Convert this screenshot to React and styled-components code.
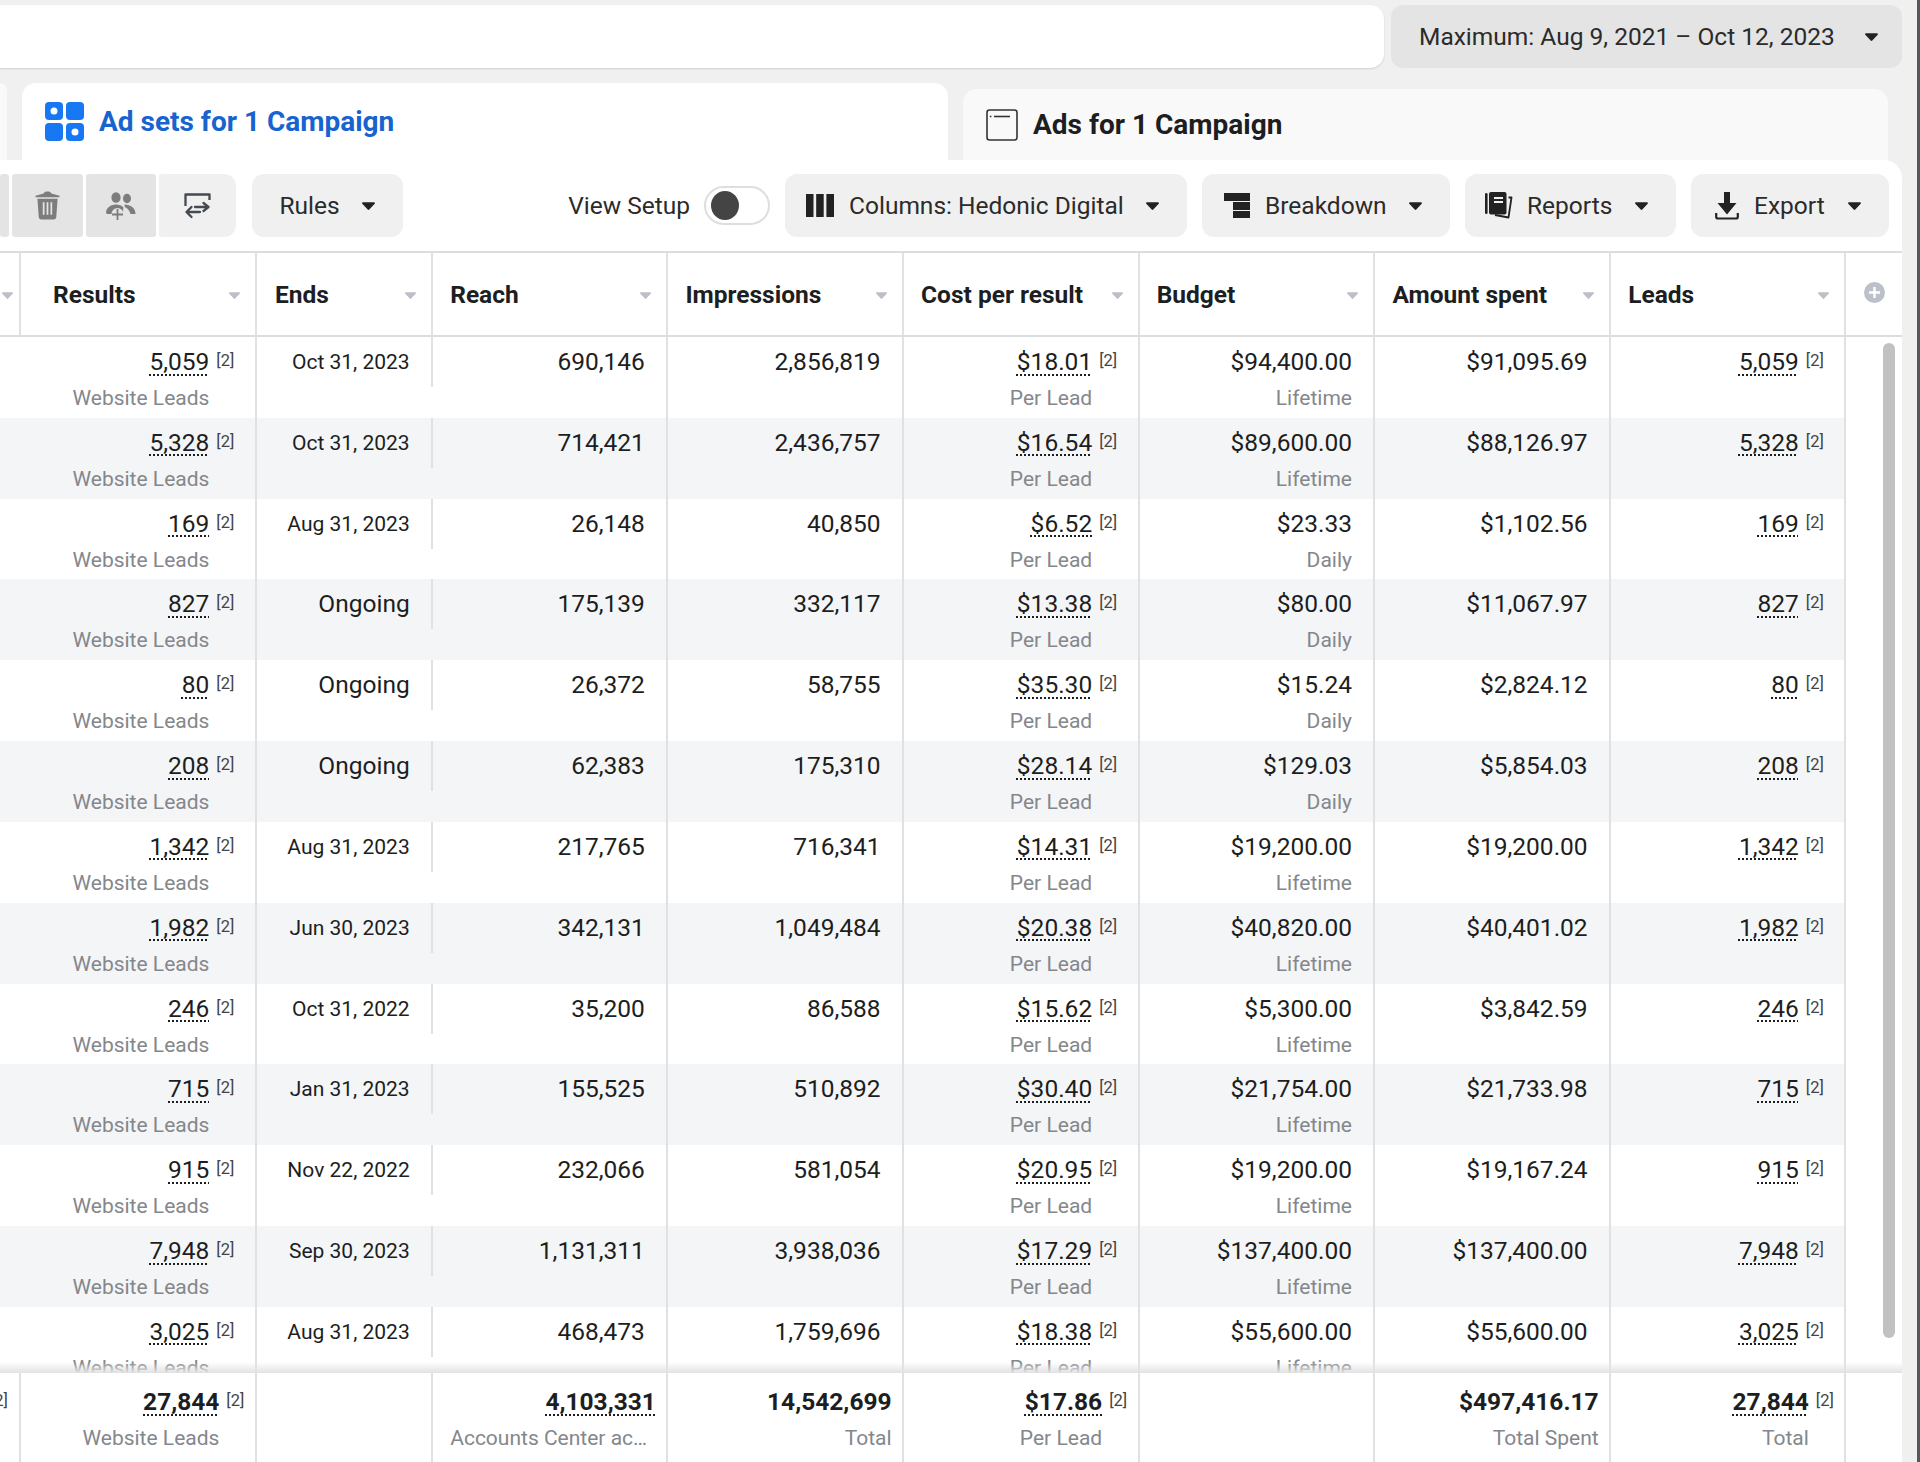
import React from 'react';
import styled, { createGlobalStyle } from 'styled-components';

const GRID = '21.1px 235.8px 176.3px 235.2px 235.7px 235.6px 235.8px 235.7px 235.2px 55.6px';

const GlobalStyle = createGlobalStyle`
  html, body { margin: 0; padding: 0; }
  body { font-family: Roboto, "Liberation Sans", sans-serif; color: #1c1e21; }
  * { box-sizing: border-box; }
`;

const Page = styled.div`
  display: flex;
  width: 1920px;
  height: 1462px;
  overflow: hidden;
  background: #f0f0f0;
`;

const Main = styled.div`
  display: flex;
  flex-direction: column;
  width: 1917px;
`;

const ScreenEdge = styled.div`
  width: 3px;
  background: #55585c;
`;

const TopRow = styled.div`
  display: flex;
  flex: none;
  gap: 7px;
  height: 68px;
  padding-top: 5px;
`;

const SearchBar = styled.div`
  width: 1384px;
  background: #fff;
  border-radius: 0 14px 14px 0;
  box-shadow: 0 1px 2px rgba(0, 0, 0, 0.14);
`;

const DatePicker = styled.div`
  display: flex;
  align-items: center;
  justify-content: space-between;
  width: 511px;
  padding: 0 23px 0 28px;
  background: #e4e4e4;
  border-radius: 12px;
  font-size: 24.5px;
  color: #2b2b2b;
`;

const TabRow = styled.div`
  display: flex;
  flex: none;
  align-items: flex-end;
  gap: 15px;
  height: 92px;
`;

const TabStub = styled.div`
  width: 7px;
  height: 77px;
  background: #f9f9f9;
  border-radius: 0 12px 0 0;
`;

const Tab = styled.div`
  display: flex;
  align-items: center;
  gap: 15px;
  height: ${(p) => (p.$active ? '77px' : '71px')};
  width: ${(p) => (p.$active ? '926px' : '925px')};
  padding-left: 23px;
  background: ${(p) => (p.$active ? '#fff' : '#f9f9f9')};
  color: ${(p) => (p.$active ? '#1763cf' : '#1c1e21')};
  border-radius: 14px 14px 0 0;
  font-size: 28px;
  font-weight: 700;
`;

const Panel = styled.div`
  display: flex;
  flex: 1;
  flex-direction: column;
  min-height: 0;
  width: 1902px;
  background: #fff;
  border-radius: 0 18px 0 0;
`;

const Toolbar = styled.div`
  display: flex;
  flex: none;
  align-items: center;
  height: 91px;
  padding: 14px 13px 14px 0;
`;

const IconGroup = styled.div`
  display: flex;
  gap: 3px;
  margin-right: 16px;
`;

const IconButton = styled.div`
  display: flex;
  align-items: center;
  justify-content: center;
  width: ${(p) => p.$w}px;
  height: 63px;
  background: ${(p) => (p.$off ? '#e4e4e4' : '#f0f0f0')};
  border-radius: ${(p) => p.$radius || '3px'};
`;

const Button = styled.div`
  display: flex;
  flex: none;
  align-items: center;
  justify-content: space-between;
  width: ${(p) => p.$w}px;
  height: 63px;
  padding: 0 27px 0 ${(p) => p.$pad || 21}px;
  background: #f0f0f0;
  border-radius: 12px;
  font-size: 24.5px;
  color: #2b2b2b;
`;

const ButtonLabel = styled.div`
  display: flex;
  align-items: center;
  gap: ${(p) => p.$gap || 15}px;
`;

const RightTools = styled.div`
  display: flex;
  align-items: center;
  gap: 15px;
  margin-left: auto;
`;

const ViewSetup = styled.div`
  display: flex;
  align-items: center;
  gap: 14px;
  font-size: 24.5px;
  color: #2b2b2b;
`;

const Toggle = styled.div`
  display: flex;
  align-items: center;
  width: 66px;
  height: 39px;
  padding-left: 5px;
  background: #fff;
  border: 2px solid #dedede;
  border-radius: 20px;
`;

const Knob = styled.div`
  width: 28px;
  height: 29px;
  border-radius: 50%;
  background: #444;
`;

const HeaderRow = styled.div`
  display: grid;
  flex: none;
  grid-template-columns: ${GRID};
  height: 86px;
  border-top: 2px solid #dcdddf;
  border-bottom: 2px solid #dcdddf;
`;

const HeaderCell = styled.div`
  display: flex;
  align-items: center;
  justify-content: space-between;
  padding: 0 14px 0 ${(p) => p.$indent || 17}px;
  border-right: 2px solid #e0e1e3;
  font-size: 24.5px;
  font-weight: 700;
  white-space: nowrap;
  overflow: hidden;
`;

const LastHeaderCell = styled.div`
  display: flex;
  justify-content: center;
  padding-top: 29px;
`;

const Body = styled.div`
  flex: 1;
  min-height: 0;
  overflow: hidden;
  position: relative;
`;

const Thumb = styled.div`
  position: absolute;
  top: 6px;
  right: 7px;
  width: 12px;
  height: 995px;
  border-radius: 6px;
  background: #c1c1c1;
`;

const Row = styled.div`
  display: grid;
  grid-template-columns: ${GRID};
  height: 80.83px;
`;

const Cell = styled.div`
  padding: 10px 21.5px 0 0;
  background: ${(p) => (p.$alt ? '#f4f5f7' : '#fff')};
  border-right: ${(p) => (p.$bare ? 'none' : '2px solid #e0e1e3')};
  text-align: right;
`;

const EndsBox = styled.div`
  height: 50px;
  margin: -10px -21.5px 0 0;
  padding: 10px 21.5px 0 0;
  border-right: 2px solid #e0e1e3;
`;

const Value = styled.div`
  font-size: 24.5px;
  line-height: 30px;
  font-weight: ${(p) => (p.$bold ? 700 : 400)};
  text-align: ${(p) => p.$align || 'inherit'};
`;

const EndsText = styled.div`
  font-size: ${(p) => (p.$big ? '24.5px' : '21px')};
  line-height: 30px;
`;

const Linked = styled.span`
  text-decoration: underline dotted 2px;
  text-underline-offset: 4px;
  text-decoration-skip-ink: none;
`;

const Sub = styled.div`
  margin-top: 8px;
  font-size: 21px;
  line-height: 26px;
  color: #84878b;
`;

const MetricGrid = styled.div`
  display: grid;
  grid-template-columns: 1fr 25px;
  margin-right: ${(p) => (p.$foot ? '0' : '-1px')};
`;

const Sup = styled.div`
  justify-self: end;
  font-size: 16.5px;
  line-height: 27px;
  color: #444;
`;

const SubInMetric = styled(Sub)`
  grid-column: 1;
`;

const Footer = styled.div`
  display: grid;
  flex: none;
  grid-template-columns: ${GRID};
  height: 89px;
  background: #fff;
  position: relative;

  &::before {
    content: '';
    position: absolute;
    left: 0;
    right: 0;
    top: -11px;
    height: 11px;
    background: linear-gradient(rgba(225, 225, 225, 0), #e2e2e2);
  }
`;

const FootCell = styled.div`
  padding: ${(p) => (p.$left ? '14px 10.5px 0 17px' : '14px 10.5px 0 0')};
  border-right: ${(p) => (p.$bare ? 'none' : '2px solid #e0e1e3')};
  text-align: ${(p) => (p.$left ? 'left' : 'right')};
  overflow: hidden;
`;

const ClippedCell = styled.div`
  display: flex;
  justify-content: flex-end;
  width: 8px;
  padding-top: 14px;
  font-size: 16.5px;
  line-height: 27px;
  color: #444;
  white-space: nowrap;
`;

const FootEdge = styled.div`
  border-right: 2px solid #e0e1e3;
  overflow: hidden;
`;

const Truncated = styled(Sub)`
  white-space: nowrap;
  overflow: hidden;
  text-overflow: ellipsis;
`;

const Svg = styled.svg`
  flex: none;
  margin-top: ${(p) => p.$nudge || 0}px;
`;

const Caret = ({ w = 15, h = 10, color = '#222', nudge }) => (
  <Svg $nudge={nudge} width={w} height={h} viewBox="0 0 15 10">
    <path d="M2 1.2h11c.9 0 1.3 1 .7 1.6L8.300 8.600c-.4.5-1.200.5-1.600 0L1.300 2.800C.7 2.200 1.100 1.200 2 1.200z" fill={color} />
  </Svg>
);

const SortCaret = () => <Caret w={13} h={9} color="#bcc0c6" nudge={3} />;

const AdSetsIcon = () => (
  <svg width="39" height="39" viewBox="0 0 39 39">
    <rect x="0" y="0" width="18" height="18" rx="4" fill="#1877f2" />
    <rect x="21" y="0" width="18" height="18" rx="4" fill="#1877f2" />
    <rect x="0" y="21" width="18" height="18" rx="4" fill="#1877f2" />
    <rect x="21" y="21" width="18" height="18" rx="4" fill="#1877f2" />
    <circle cx="9" cy="9" r="3.5" fill="#fff" />
    <circle cx="30" cy="30" r="3.5" fill="#fff" />
  </svg>
);

const AdsIcon = () => (
  <svg width="32" height="32" viewBox="0 0 32 32" fill="none" stroke="#333" strokeWidth="1.6">
    <rect x="1" y="1" width="30" height="30" rx="2.5" />
    <path d="M8 7.5h16" />
    <path d="M3.8 7.5h1.6" />
  </svg>
);

const TrashIcon = () => (
  <svg width="25" height="29" viewBox="0 0 26 30" fill="#7d7d7d">
    <path d="M9 2.500C9.600 1 11 .5 13 .5s3.400.5 4 2l8.500 2.300v1.700H.5V4.800z" />
    <path d="M2.500 8h21l-1.400 19c-.1 1.600-1.100 2.500-2.700 2.500H6.600c-1.600 0-2.600-.9-2.700-2.500z" />
    <path d="M9 11.500v13M13 11.500v13M17 11.500v13" stroke="#e4e4e4" strokeWidth="1.800" fill="none" />
  </svg>
);

const PeopleIcon = () => (
  <svg width="30" height="28" viewBox="0 0 30 28" fill="#7d7d7d">
    <ellipse cx="10" cy="5.500" rx="4.600" ry="5.300" />
    <ellipse cx="21" cy="6.500" rx="4" ry="4.700" />
    <path d="M0 21c0-5 4.500-8.500 10-8.500 3 0 5.500 1 7.300 2.700L17 22H1z" />
    <path d="M18.500 12.500c6 0 11 3.500 11 9.500h-5c-.8-3.200-2.700-5.500-5.700-7z" />
    <circle cx="11.500" cy="22" r="6" fill="#e4e4e4" />
    <path d="M11.500 17v11M6 22.500h11" stroke="#7d7d7d" strokeWidth="1.800" fill="none" />
  </svg>
);

const SwapIcon = () => (
  <svg width="27" height="26" viewBox="0 0 27 26" fill="none" stroke="#444a50" strokeWidth="2.300" strokeLinejoin="round" strokeLinecap="round">
    <path d="M1.500 13V1.500h24V7" strokeLinecap="butt" />
    <path d="M11 14h13.500M19.500 10l5 4-5 4" />
    <path d="M16 19H2.500M7.500 14l-5 5 5 5" />
  </svg>
);

const ColumnsIcon = () => (
  <svg width="28" height="23" viewBox="0 0 28 23" fill="#222">
    <rect x="0" y="0" width="7.500" height="23" />
    <rect x="10.200" y="0" width="7.500" height="23" />
    <rect x="20.400" y="0" width="7.600" height="23" />
  </svg>
);

const BreakdownIcon = () => (
  <svg width="26" height="25" viewBox="0 0 26 25" fill="#222">
    <rect x="0" y="0" width="26" height="8" />
    <rect x="9" y="9" width="17" height="8" />
    <rect x="9" y="18" width="17" height="7" />
  </svg>
);

const ReportsIcon = () => (
  <svg width="28" height="27" viewBox="0 0 28 27">
    <path d="M23.500 5.500h3l-3 20-13.500-2.500" fill="none" stroke="#222" strokeWidth="1.800" strokeLinejoin="round" />
    <rect x="0" y="1" width="2.600" height="21" rx="1.300" fill="#222" />
    <rect x="4" y="0" width="17.500" height="22.500" rx="2" fill="#222" />
    <path d="M9 6h9M9 10h9" stroke="#f0f0f0" strokeWidth="1.800" />
  </svg>
);

const ExportIcon = () => (
  <svg width="24" height="28" viewBox="0 0 24 28" fill="#222">
    <path d="M9 0h6v11h6.500L12 22.500 2.500 11H9z" />
    <path d="M1.200 21v3.800c0 .9.700 1.700 1.600 1.700h18.400c.9 0 1.600-.8 1.600-1.700V21" fill="none" stroke="#222" strokeWidth="2.200" />
  </svg>
);

const PlusCircle = () => (
  <svg width="21" height="21" viewBox="0 0 21 21">
    <circle cx="10.500" cy="10.500" r="10.500" fill="#bcc0c8" />
    <path d="M10.500 5v11M5 10.500h11" stroke="#fff" strokeWidth="2.400" />
  </svg>
);

const HEADERS = [
  ['Results', 32],
  ['Ends', 18],
  ['Reach'],
  ['Impressions'],
  ['Cost per result'],
  ['Budget'],
  ['Amount spent'],
  ['Leads'],
];

const ROWS = [
  ['5,059', 'Oct 31, 2023', '690,146', '2,856,819', '$18.01', '$94,400.00', 'Lifetime', '$91,095.69'],
  ['5,328', 'Oct 31, 2023', '714,421', '2,436,757', '$16.54', '$89,600.00', 'Lifetime', '$88,126.97'],
  ['169', 'Aug 31, 2023', '26,148', '40,850', '$6.52', '$23.33', 'Daily', '$1,102.56'],
  ['827', 'Ongoing', '175,139', '332,117', '$13.38', '$80.00', 'Daily', '$11,067.97'],
  ['80', 'Ongoing', '26,372', '58,755', '$35.30', '$15.24', 'Daily', '$2,824.12'],
  ['208', 'Ongoing', '62,383', '175,310', '$28.14', '$129.03', 'Daily', '$5,854.03'],
  ['1,342', 'Aug 31, 2023', '217,765', '716,341', '$14.31', '$19,200.00', 'Lifetime', '$19,200.00'],
  ['1,982', 'Jun 30, 2023', '342,131', '1,049,484', '$20.38', '$40,820.00', 'Lifetime', '$40,401.02'],
  ['246', 'Oct 31, 2022', '35,200', '86,588', '$15.62', '$5,300.00', 'Lifetime', '$3,842.59'],
  ['715', 'Jan 31, 2023', '155,525', '510,892', '$30.40', '$21,754.00', 'Lifetime', '$21,733.98'],
  ['915', 'Nov 22, 2022', '232,066', '581,054', '$20.95', '$19,200.00', 'Lifetime', '$19,167.24'],
  ['7,948', 'Sep 30, 2023', '1,131,311', '3,938,036', '$17.29', '$137,400.00', 'Lifetime', '$137,400.00'],
  ['3,025', 'Aug 31, 2023', '468,473', '1,759,696', '$18.38', '$55,600.00', 'Lifetime', '$55,600.00'],
];

const Metric = ({ value, sub, foot }) => (
  <MetricGrid $foot={foot}>
    <Value $bold={foot}><Linked>{value}</Linked></Value>
    <Sup>[2]</Sup>
    <SubInMetric>{sub}</SubInMetric>
  </MetricGrid>
);

function DataRow({ row, alt }) {
  const [results, ends, reach, impressions, cost, budget, budgetType, spent] = row;
  return (
    <Row>
      <Cell $alt={alt} />
      <Cell $alt={alt}><Metric value={results} sub="Website Leads" /></Cell>
      <Cell $alt={alt} $bare>
        <EndsBox><EndsText $big={ends === 'Ongoing'}>{ends}</EndsText></EndsBox>
      </Cell>
      <Cell $alt={alt}><Value>{reach}</Value></Cell>
      <Cell $alt={alt}><Value>{impressions}</Value></Cell>
      <Cell $alt={alt}><Metric value={cost} sub="Per Lead" /></Cell>
      <Cell $alt={alt}>
        <Value>{budget}</Value>
        <Sub>{budgetType}</Sub>
      </Cell>
      <Cell $alt={alt}><Value>{spent}</Value></Cell>
      <Cell $alt={alt}><Metric value={results} /></Cell>
      <Cell $bare />
    </Row>
  );
}

export default function App() {
  return (
    <>
      <GlobalStyle />
      <Page>
        <Main>
          <TopRow>
            <SearchBar />
            <DatePicker>
              Maximum: Aug 9, 2021 – Oct 12, 2023
              <Caret />
            </DatePicker>
          </TopRow>
          <TabRow>
            <TabStub />
            <Tab $active><AdSetsIcon />Ad sets for 1 Campaign</Tab>
            <Tab><AdsIcon />Ads for 1 Campaign</Tab>
          </TabRow>
          <Panel>
            <Toolbar>
              <IconGroup>
                <IconButton $w={8.5} $off />
                <IconButton $w={71} $off><TrashIcon /></IconButton>
                <IconButton $w={70} $off><PeopleIcon /></IconButton>
                <IconButton $w={77} $radius="3px 12px 12px 3px"><SwapIcon /></IconButton>
              </IconGroup>
              <Button $w={151} $pad={28}>Rules<Caret /></Button>
              <RightTools>
                <ViewSetup>View Setup<Toggle><Knob /></Toggle></ViewSetup>
                <Button $w={402}>
                  <ButtonLabel><ColumnsIcon />Columns: Hedonic Digital</ButtonLabel>
                  <Caret />
                </Button>
                <Button $w={248} $pad={22}>
                  <ButtonLabel><BreakdownIcon />Breakdown</ButtonLabel>
                  <Caret />
                </Button>
                <Button $w={211} $pad={20}>
                  <ButtonLabel $gap={14}><ReportsIcon />Reports</ButtonLabel>
                  <Caret />
                </Button>
                <Button $w={198} $pad={24}>
                  <ButtonLabel><ExportIcon />Export</ButtonLabel>
                  <Caret />
                </Button>
              </RightTools>
            </Toolbar>
            <HeaderRow>
              <HeaderCell $indent={1}><SortCaret /></HeaderCell>
              {HEADERS.map(([label, indent]) => (
                <HeaderCell key={label} $indent={indent}>{label}<SortCaret /></HeaderCell>
              ))}
              <LastHeaderCell><PlusCircle /></LastHeaderCell>
            </HeaderRow>
            <Body>
              {ROWS.map((row, i) => (
                <DataRow key={row[0]} row={row} alt={i % 2 === 1} />
              ))}
              <Thumb />
            </Body>
            <Footer>
              <FootEdge><ClippedCell>[2]</ClippedCell></FootEdge>
              <FootCell><Metric foot value="27,844" sub="Website Leads" /></FootCell>
              <FootCell />
              <FootCell $left>
                <Value $bold $align="right"><Linked>4,103,331</Linked></Value>
                <Truncated>Accounts Center accounts</Truncated>
              </FootCell>
              <FootCell>
                <Value $bold>14,542,699</Value>
                <Sub>Total</Sub>
              </FootCell>
              <FootCell><Metric foot value="$17.86" sub="Per Lead" /></FootCell>
              <FootCell />
              <FootCell>
                <Value $bold>$497,416.17</Value>
                <Sub>Total Spent</Sub>
              </FootCell>
              <FootCell><Metric foot value="27,844" sub="Total" /></FootCell>
              <FootCell $bare />
            </Footer>
          </Panel>
        </Main>
        <ScreenEdge />
      </Page>
    </>
  );
}
